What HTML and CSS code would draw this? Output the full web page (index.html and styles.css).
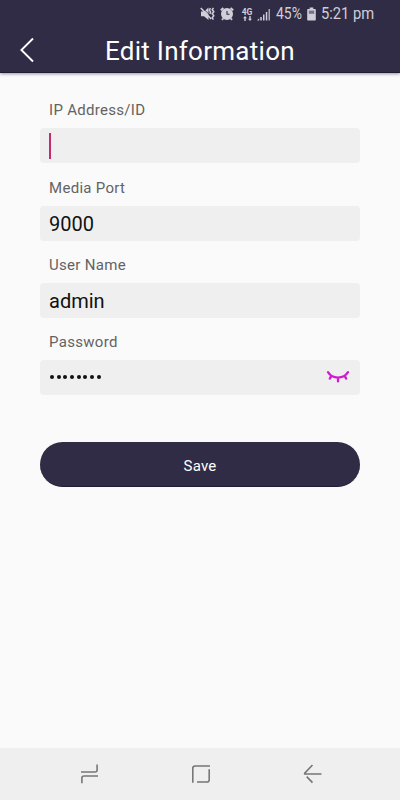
FILE: index.html
```html
<!DOCTYPE html>
<html lang="en">
<head>
<meta charset="utf-8">
<title>Edit Information</title>
<link rel="stylesheet" href="styles.css">
</head>
<body>
<div class="screen">
  <header class="header">
    <div class="status">
      <svg class="icon-mute" width="16" height="14" viewBox="0 0 16 14">
        <path d="M1 4.5h3L8.5.6v12.4L4 9.2H1z" fill="#d0ced8"/>
        <path d="M2 .2l10 10.2" stroke="#302c45" stroke-width=".8"/>
        <path d="M.8 1l10.4 11" stroke="#d0ced8" stroke-width="1.6"/>
        <path d="M10.4 1.2l-1 2 1.2 2-.8 1.6M13.4.8l-1.2 2 1.6 2-1.6 2 1.6 2-1.6 2 1.2 1.8" stroke="#d0ced8" stroke-width="1.5" fill="none"/>
      </svg>
      <svg class="icon-alarm" width="14" height="14" viewBox="0 0 14 14">
        <path d="M.8 3.2L3.4 1M10.6 1l2.6 2.2M3 11.6l-1 1.3M11 11.6l1 1.3" stroke="#d0ced8" stroke-width="1.9"/>
        <circle cx="7" cy="7" r="6" fill="#d0ced8"/>
        <path d="M7 3.9v3.4h2.5" stroke="#302c45" stroke-width="1.1" fill="none"/>
      </svg>
      <div class="network">
        <span>4G</span>
        <svg width="9" height="5" viewBox="0 0 9 5"><path d="M2 0L0 2.3h1.3V5h1.4V2.3H4zM7 5L5 2.7h1.3V0h1.4v2.7H9z" fill="#d0ced8"/></svg>
      </div>
      <svg class="icon-signal" width="14" height="13" viewBox="0 0 14 13">
        <path d="M0 12.5h2.2v-2.2zM3.3 9h1.5v3.5H3.3zM6 6.5h1.5v6H6zM8.8 4h1.5v8.5H8.8z" fill="#d0ced8"/>
        <path d="M11.5 1H13v11.5h-1.5z" fill="#aaa7b5"/>
      </svg>
      <span class="percent">45%</span>
      <svg class="icon-battery" width="9" height="14" viewBox="0 0 9 14">
        <path d="M2.7.5h3.6V2H8a.8.8 0 0 1 .8.8v9.9a.8.8 0 0 1-.8.8H1a.8.8 0 0 1-.8-.8V2.8A.8.8 0 0 1 1 2h1.7z" fill="#d0ced8"/>
        <path d="M1.8 3.6h5.4v3.2H1.8z" fill="#77738a"/>
      </svg>
      <span class="clock">5:21 pm</span>
    </div>
    <div class="toolbar">
      <svg class="back" width="16" height="26" viewBox="0 0 16 26"><path d="M13 1.5L1.4 13 13 24.5" stroke="#fff" stroke-width="1.9" fill="none"/></svg>
      <h1 class="title">Edit Information</h1>
    </div>
  </header>
  <main class="form">
    <div class="group"><div class="label">IP Address/ID</div><div class="field"><span class="caret"></span></div></div>
    <div class="group"><div class="label">Media Port</div><div class="field"><span class="value">9000</span></div></div>
    <div class="group"><div class="label">User Name</div><div class="field"><span class="value">admin</span></div></div>
    <div class="group"><div class="label">Password</div><div class="field">
      <span class="dots"><i></i><i></i><i></i><i></i><i></i><i></i><i></i><i></i></span>
      <svg class="eye" width="24" height="14" viewBox="0 0 24 14"><path d="M2 2.2C6.4 9.4 17.6 9.4 22 2.2M5.2 6.2L3.8 8.6M12 8v3.4M18.8 6.2l1.4 2.4" stroke="#cf1ccf" stroke-width="2.3" stroke-linecap="round" fill="none"/></svg>
    </div></div>
    <div class="save">Save</div>
  </main>
  <nav class="nav">
    <svg width="20" height="20" viewBox="0 0 20 20"><path d="M2 8h14q2.1 0 2.1-2V.5M19 12H5q-2.1 0-2.1 2v5.2" /></svg>
    <svg width="20" height="20" viewBox="0 0 20 20"><path d="M1.8 18.8V4.3q0-2.3 2.3-2.3H19M18.2 5.3v10.4q0 2.3-2.3 2.3H6" /></svg>
    <svg width="20" height="20" viewBox="0 0 20 20"><path d="M9.5 1L2 8.9q-1 1.1.3 1.1H18.5M3.7 12.6l5.8 6" /></svg>
  </nav>
</div>
</body>
</html>
```
FILE: styles.css
```css
* { box-sizing: border-box; }
body { margin: 0; font-family: Roboto, "Liberation Sans", sans-serif; }
.screen { width: 400px; height: 800px; display: flex; flex-direction: column; background: #fafafa; }
.header { height: 73px; background: #302c45; border-bottom: 1px solid #211b38; box-shadow: 0 1px 3px rgba(0,0,0,.4); }
.status { height: 28px; display: flex; align-items: center; padding-left: 200px; color: #d0ced8; font-size: 16px; line-height: 28px; white-space: nowrap; }
.status svg { display: block; flex: none; }
.icon-alarm { margin-left: 4px; }
.network { width: 12px; margin-left: 7px; display: flex; flex-direction: column; align-items: center; font-size: 8.5px; font-weight: 700; line-height: 8px; }
.icon-signal { margin-left: 4px; }
.percent { width: 27px; margin-left: 5px; }
.percent, .clock { transform-origin: left center; }
.percent { transform: scale(.87, 1.04); }
.icon-battery { margin-left: 4px; }
.clock { margin-left: 5px; transform: scale(.92, 1.04); }
.toolbar { height: 44px; display: flex; align-items: center; padding-left: 20px; }
.back { display: block; }
.title { margin: 2px 0 0 69px; color: #fff; font-size: 26px; font-weight: 400; line-height: 44px; letter-spacing: .27px; white-space: nowrap; }
.form { flex: 1; padding: 24.4px 40px 0; }
.group { height: 77.15px; padding-top: 4px; }
.label { height: 27px; padding-left: 9px; font-size: 15px; line-height: 19px; color: #636363; letter-spacing: .3px; }
.field { height: 35px; display: flex; align-items: center; justify-content: space-between; padding: 0 10px 0 9px; border-radius: 4px; background: #efefef; }
.caret { width: 2px; height: 26px; background: #c52b72; }
.value { padding-top: 2px; font-size: 20px; line-height: 33px; color: #111; }
.dots { display: flex; gap: 2.7px; padding-left: 1px; }
.dots i { width: 4px; height: 4px; border-radius: 50%; background: #111; }
.save { height: 45px; margin-top: 36px; border-radius: 23px; background: #302c45; border-bottom: 1px solid #211b38; color: #fff; font-size: 15px; line-height: 48px; letter-spacing: .2px; text-align: center; }
.nav { height: 52px; display: flex; align-items: center; padding-left: 79px; gap: 92px; background: #efefef; }
.nav svg { display: block; fill: none; stroke: #777; stroke-width: 1.6; }
```
